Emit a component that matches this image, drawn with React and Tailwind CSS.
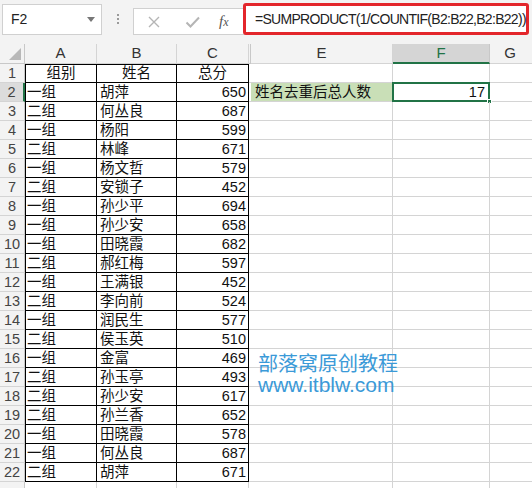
const FONT = { fontFamily: '"Liberation Sans", "Noto Sans CJK SC", sans-serif' };

const rows = [
  ["组别", "姓名", "总分"],
  ["一组", "胡萍", "650"],
  ["二组", "何丛良", "687"],
  ["一组", "杨阳", "599"],
  ["二组", "林峰", "671"],
  ["一组", "杨文哲", "579"],
  ["二组", "安锁子", "452"],
  ["一组", "孙少平", "694"],
  ["一组", "孙少安", "658"],
  ["一组", "田晓霞", "682"],
  ["二组", "郝红梅", "597"],
  ["一组", "王满银", "452"],
  ["二组", "李向前", "524"],
  ["一组", "润民生", "577"],
  ["二组", "侯玉英", "510"],
  ["一组", "金富", "469"],
  ["二组", "孙玉亭", "493"],
  ["二组", "孙少安", "617"],
  ["二组", "孙兰香", "652"],
  ["一组", "田晓霞", "578"],
  ["一组", "何丛良", "687"],
  ["二组", "胡萍", "671"],
];

function TopBar() {
  return (
    <div className="h-[44px] bg-[#f3f3f3] flex items-start relative">
      <div className="mt-[4px] ml-[2px] w-[100px] h-[31px] bg-white border border-[#d0d0d0] flex items-center justify-between pl-[8px] pr-[6px]">
        <span className="text-[14px] text-[#222]">F2</span>
        <span className="w-0 h-0 border-l-[4px] border-r-[4px] border-t-[5px] border-l-transparent border-r-transparent border-t-[#777]" />
      </div>
      <div className="w-[31px] flex flex-col items-center gap-[2px] mt-[14px]">
        <span className="w-[2px] h-[2px] bg-[#9a9a9a]" />
        <span className="w-[2px] h-[2px] bg-[#9a9a9a]" />
        <span className="w-[2px] h-[2px] bg-[#9a9a9a]" />
      </div>
      <div className="mt-[8px] h-[27px] w-[130px] bg-white border border-[#d0d0d0] border-r-0 flex items-center">
        <svg width="14" height="14" viewBox="0 0 14 14" className="ml-[13px]">
          <path d="M2 2 L12 12 M12 2 L2 12" stroke="#b5b5b5" strokeWidth="1.4" />
        </svg>
        <svg width="16" height="14" viewBox="0 0 16 14" className="ml-[24px]">
          <path d="M1.5 7.5 L5.5 11.5 L14 2.5" stroke="#b5b5b5" strokeWidth="2" fill="none" />
        </svg>
        <span className="ml-[18px] text-[15px] italic text-[#555]" style={{ fontFamily: '"Liberation Serif", serif' }}>
          f<span className="text-[12px]">x</span>
        </span>
      </div>
      <div className="absolute left-[243px] top-[3px] w-[286px] h-[32px] border-[3px] border-[#e3262b] rounded-[3px] bg-white flex items-center pl-[9px]">
        <span className="text-[14px] text-[#222] tracking-[-0.7px] whitespace-nowrap">
          =SUMPRODUCT(1/COUNTIF(B2:B22,B2:B22))
        </span>
      </div>
    </div>
  );
}

function Header() {
  return (
    <div className="h-[20px] flex bg-[#f3f3f3] text-[15px] text-[#333]">
      <div className="w-[25px] h-full border-r border-b border-[#c8c8c8] relative">
        <svg width="12" height="12" viewBox="0 0 12 12" className="absolute right-[3px] bottom-[3px]">
          <path d="M12 0 L12 12 L0 12 Z" fill="#b8b8b8" />
        </svg>
      </div>
      <div className="w-[72px] h-full border-r border-b border-[#d4d4d4] flex items-center justify-center">A</div>
      <div className="w-[80px] h-full border-r border-b border-[#d4d4d4] flex items-center justify-center">B</div>
      <div className="w-[72px] h-full border-r border-b border-[#d4d4d4] flex items-center justify-center">C</div>
      <div className="w-[2px] h-full border-r border-b border-[#c8c8c8]" />
      <div className="w-[142px] h-full border-r border-b border-[#d4d4d4] flex items-center justify-center">E</div>
      <div className="w-[97px] h-full bg-[#d5d5d5] border-r border-[#c8c8c8] border-b-2 border-b-[#217346] flex items-center justify-center text-[#217346]">F</div>
      <div className="flex-1 h-full border-b border-[#d4d4d4] flex items-center justify-center pr-[2px]">G</div>
    </div>
  );
}

function Row({ n, data, label = true }) {
  const selected = n === 2;
  const first = n === 1;
  const tb = "border-r border-b border-black";
  return (
    <div className="h-[19px] flex text-[14.5px] text-[#111] leading-none">
      <div
        className={
          "w-[25px] h-full flex items-center justify-center text-[#444] border-b border-[#d4d4d4] " +
          (selected ? "bg-[#dcdcdc] border-r-2 border-r-[#217346]" : "bg-[#f3f3f3] border-r border-r-[#c8c8c8]")
        }
      >
        {label ? n : ""}
      </div>
      {data ? (
        <>
          <div className={"w-[72px] h-full flex items-center border-l border-l-black " + tb + (first ? " border-t border-t-black justify-center" : " pl-[1px]")}>
            {data[0]}
          </div>
          <div className={"w-[80px] h-full flex items-center " + tb + (first ? " border-t border-t-black justify-center" : " pl-[3px]")}>
            {data[1]}
          </div>
          <div className={"w-[72px] h-full flex items-center " + tb + (first ? " border-t border-t-black justify-center" : " justify-end pr-[2px]")}>
            {data[2]}
          </div>
        </>
      ) : (
        <>
          <div className="w-[72px] h-full border-r border-b border-[#d4d4d4]" />
          <div className="w-[80px] h-full border-r border-b border-[#d4d4d4]" />
          <div className="w-[72px] h-full border-r border-b border-[#d4d4d4]" />
        </>
      )}
      <div className="w-[2px] h-full border-b border-[#d4d4d4]" />
      <div className={"w-[142px] h-full flex items-center border-r border-b border-[#d4d4d4] pl-[4px] " + (selected ? "bg-[#c9dfb7]" : "")}>
        {selected ? "姓名去重后总人数" : ""}
      </div>
      <div className="w-[97px] h-full border-r border-b border-[#d4d4d4] relative flex items-center justify-end pr-[4px]">
        {selected && (
          <>
            <span>17</span>
            <span className="absolute -left-[1px] -top-[1px] -right-[1px] -bottom-[1px] border-2 border-[#217346]" />
            <span className="absolute -right-[3px] -bottom-[3px] w-[5px] h-[5px] bg-[#217346] border border-white" />
          </>
        )}
      </div>
      <div className="flex-1 h-full border-b border-[#d4d4d4]" />
    </div>
  );
}

export default function App() {
  return (
    <div className="w-[532px] h-[488px] bg-white overflow-hidden relative" style={FONT}>
      <TopBar />
      <Header />
      {rows.map((r, i) => (
        <Row key={i} n={i + 1} data={r} />
      ))}
      <Row n={23} data={null} label={false} />
      <div className="absolute left-[258px] top-[352px] text-[#3b9ad8] pointer-events-none flex flex-col gap-[1px]">
        <div className="text-[20px] leading-[21px]" style={{ fontFamily: '"Noto Sans CJK SC", sans-serif' }}>部落窝原创教程</div>
        <div className="text-[21px] leading-[21px]">www.itblw.com</div>
      </div>
    </div>
  );
}
